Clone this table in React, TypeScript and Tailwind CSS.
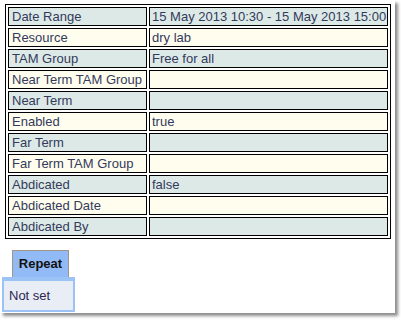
const rows: [string, string][] = [
  ['Date Range', '15 May 2013 10:30 - 15 May 2013 15:00'],
  ['Resource', 'dry lab'],
  ['TAM Group', 'Free for all'],
  ['Near Term TAM Group', ''],
  ['Near Term', ''],
  ['Enabled', 'true'],
  ['Far Term', ''],
  ['Far Term TAM Group', ''],
  ['Abdicated', 'false'],
  ['Abdicated Date', ''],
  ['Abdicated By', ''],
]

const App = (): JSX.Element => {
  return (
    <div className="w-[401px] h-[323px] bg-white font-['Liberation_Sans',Arial,sans-serif] text-[13px] text-[#333a5c]">
      <div className="relative w-[395px] h-[313px] bg-white shadow-[3px_3px_3px_rgba(0,0,0,0.45)] pt-[4px]">
        <table className="ml-[5px] w-[386px] border border-black border-separate border-spacing-[2px] table-fixed">
          <colgroup>
            <col className="w-[139px]" />
            <col />
          </colgroup>
          <tbody>
            {rows.map(([label, value], i) => (
              <tr key={label} className={i % 2 === 0 ? 'bg-[#dde9e6]' : 'bg-[#fffdee]'}>
                <td className="border border-black h-[19px] pl-[3px] pr-[2px] py-0 leading-[15px] whitespace-nowrap">{label}</td>
                <td className="border border-black h-[19px] pl-[2px] pr-[2px] py-0 leading-[15px] whitespace-nowrap">{value}</td>
              </tr>
            ))}
          </tbody>
        </table>

        <div className="mt-[11px] ml-[2px] flex flex-col items-start">
          <div className="ml-[10px] w-[57px] h-[27px] bg-[#92baf7] border border-b-0 border-[#a39584] flex items-center justify-center font-bold text-[#111]">
            Repeat
          </div>
          <div className="w-[73px] h-[35px] bg-[#e9edf6] border-2 border-t-[4px] border-[#9cc3f5] flex items-center pl-[5px] text-[#2b2750]">
            Not set
          </div>
        </div>
      </div>
    </div>
  )
}

export default App
